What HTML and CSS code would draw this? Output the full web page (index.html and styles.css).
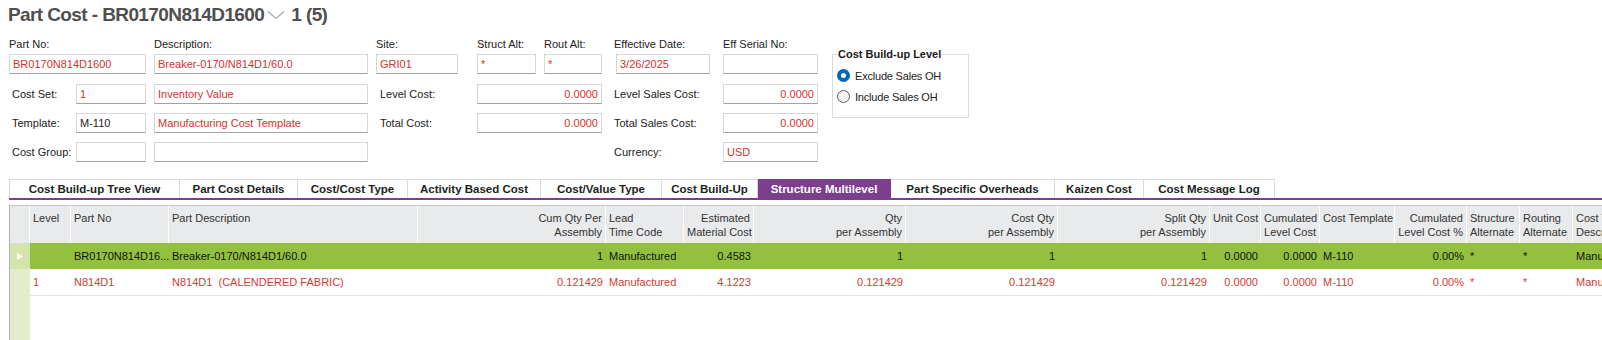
FILE: index.html
```html
<!DOCTYPE html>
<html>
<head>
<meta charset="utf-8">
<link rel="stylesheet" href="styles.css">
</head>
<body>
<div class="title">
  <span>Part Cost - BR0170N814D1600</span>
  <svg class="chev" width="18" height="10" viewBox="0 0 18 10"><polyline points="1,1.5 9,8.5 17,1.5" fill="none" stroke="#a8a8a8" stroke-width="1.2"/></svg>
  <span>1 (5)</span>
</div>

<div class="form">
  <div class="fields">
    <div class="frow labels">
      <span class="lbl c1">Part No:</span>
      <span class="lbl c4">Description:</span>
      <span class="lbl c6">Site:</span>
      <span class="lbl c8">Struct Alt:</span>
      <span class="lbl c10">Rout Alt:</span>
      <span class="lbl c12">Effective Date:</span>
      <span class="lbl c13">Eff Serial No:</span>
    </div>
    <div class="frow">
      <div class="inp pn">BR0170N814D1600</div>
      <div class="inp c4">Breaker-0170/N814D1/60.0</div>
      <div class="inp c6">GRI01</div>
      <div class="inp c8">*</div>
      <div class="inp c10">*</div>
      <div class="inp c12 eff">3/26/2025</div>
      <div class="inp c13"></div>
    </div>
    <div class="frow r2">
      <span class="lbl c1 ind">Cost Set:</span>
      <div class="inp c2">1</div>
      <div class="inp c4">Inventory Value</div>
      <span class="lbl c6 ind2">Level Cost:</span>
      <div class="inp lc num">0.0000</div>
      <span class="lbl c12">Level Sales Cost:</span>
      <div class="inp c13 num">0.0000</div>
    </div>
    <div class="frow r3">
      <span class="lbl c1 ind">Template:</span>
      <div class="inp c2 blk">M-110</div>
      <div class="inp c4">Manufacturing Cost Template</div>
      <span class="lbl c6 ind2">Total Cost:</span>
      <div class="inp lc num">0.0000</div>
      <span class="lbl c12">Total Sales Cost:</span>
      <div class="inp c13 num">0.0000</div>
    </div>
    <div class="frow r3">
      <span class="lbl c1 ind">Cost Group:</span>
      <div class="inp c2"></div>
      <div class="inp c4"></div>
      <span class="lbl c12">Currency:</span>
      <div class="inp c13">USD</div>
    </div>
  </div>
  <fieldset class="box">
    <legend>Cost Build-up Level</legend>
    <div class="radio first"><span class="rb on"></span>Exclude Sales OH</div>
    <div class="radio"><span class="rb"></span>Include Sales OH</div>
  </fieldset>
</div>

<div class="tabs">
  <div class="tab">Cost Build-up Tree View</div>
  <div class="tab">Part Cost Details</div>
  <div class="tab">Cost/Cost Type</div>
  <div class="tab">Activity Based Cost</div>
  <div class="tab">Cost/Value Type</div>
  <div class="tab">Cost Build-Up</div>
  <div class="tab active">Structure Multilevel</div>
  <div class="tab">Part Specific Overheads</div>
  <div class="tab">Kaizen Cost</div>
  <div class="tab">Cost Message Log</div>
</div>

<div class="grid">
  <div class="ghead">
    <div class="cell w-g"></div>
    <div class="cell w-lvl">Level</div>
    <div class="cell w-pn">Part No</div>
    <div class="cell w-pd">Part Description</div>
    <div class="cell w-cq r">Cum Qty Per<br>Assembly</div>
    <div class="cell w-lt">Lead<br>Time Code</div>
    <div class="cell w-em r">Estimated<br>Material Cost</div>
    <div class="cell w-q r">Qty<br>per Assembly</div>
    <div class="cell w-q r">Cost Qty<br>per Assembly</div>
    <div class="cell w-q r">Split Qty<br>per Assembly</div>
    <div class="cell w-uc r">Unit Cost</div>
    <div class="cell w-cl r">Cumulated<br>Level Cost</div>
    <div class="cell w-ct">Cost Template</div>
    <div class="cell w-cp r">Cumulated<br>Level Cost %</div>
    <div class="cell w-alt">Structure<br>Alternate</div>
    <div class="cell w-alt">Routing<br>Alternate</div>
    <div class="cell w-desc">Cost Template<br>Description</div>
  </div>
  <div class="gbody">
    <div class="gutter">
      <div class="gsel"><svg width="6" height="7" viewBox="0 0 6 7"><polygon points="0,0 6,3.5 0,7" fill="#fff"/></svg></div>
    </div>
    <div class="rows">
      <div class="grow sel">
        <div class="cell w-lvl"></div>
        <div class="cell w-pn">BR0170N814D16...</div>
        <div class="cell w-pd">Breaker-0170/N814D1/60.0</div>
        <div class="cell w-cq r">1</div>
        <div class="cell w-lt">Manufactured</div>
        <div class="cell w-em r">0.4583</div>
        <div class="cell w-q r">1</div>
        <div class="cell w-q r">1</div>
        <div class="cell w-q r">1</div>
        <div class="cell w-uc r">0.0000</div>
        <div class="cell w-cl r">0.0000</div>
        <div class="cell w-ct">M-110</div>
        <div class="cell w-cp r">0.00%</div>
        <div class="cell w-alt">*</div>
        <div class="cell w-alt">*</div>
        <div class="cell w-desc">Manufacturing Cost Template</div>
      </div>
      <div class="grow red">
        <div class="cell w-lvl">1</div>
        <div class="cell w-pn">N814D1</div>
        <div class="cell w-pd">N814D1&nbsp; (CALENDERED FABRIC)</div>
        <div class="cell w-cq r">0.121429</div>
        <div class="cell w-lt">Manufactured</div>
        <div class="cell w-em r">4.1223</div>
        <div class="cell w-q r">0.121429</div>
        <div class="cell w-q r">0.121429</div>
        <div class="cell w-q r">0.121429</div>
        <div class="cell w-uc r">0.0000</div>
        <div class="cell w-cl r">0.0000</div>
        <div class="cell w-ct">M-110</div>
        <div class="cell w-cp r">0.00%</div>
        <div class="cell w-alt">*</div>
        <div class="cell w-alt">*</div>
        <div class="cell w-desc">Manufacturing Cost Template</div>
      </div>
    </div>
  </div>
</div>
</body>
</html>
```

FILE: styles.css
```css
* { box-sizing: border-box; }
html, body { margin: 0; padding: 0; }
body {
  width: 1602px;
  height: 340px;
  overflow: hidden;
  background: #fff;
  color: #222;
  font-family: "Liberation Sans", Arial, sans-serif;
  font-size: 11px;
}

/* Title */
.title {
  display: flex;
  align-items: center;
  height: 22px;
  margin: 4px 0 0 8px;
  font-size: 19px;
  font-weight: 700;
  line-height: 22px;
  letter-spacing: -0.6px;
  color: #4f4f4f;
  white-space: nowrap;
}
.title .chev { margin: 0 6px 0 3px; }

/* Form */
.form {
  display: flex;
  align-items: flex-start;
  margin: 12px 0 0 9px;
}
.fields { width: 809px; flex: none; }
.frow {
  display: grid;
  grid-template-columns: 67px 70px 8px 214px 8px 82px 19px 59px 8px 58px 12px 109px 95px;
  height: 20px;
  align-items: center;
}
.frow.labels { height: 13px; margin-bottom: 3px; line-height: 13px; }
.frow.r2 { margin-top: 10px; }
.frow.r3 { margin-top: 9px; }

.lbl { white-space: nowrap; color: #222; }
.lbl.ind { padding-left: 3px; }
.lbl.ind2 { padding-left: 4px; }
.c1 { grid-column: 1; }
.c2 { grid-column: 2; }
.c4 { grid-column: 4; }
.c6 { grid-column: 6; }
.c8 { grid-column: 8; }
.c10 { grid-column: 10; }
.c12 { grid-column: 12; }
.c13 { grid-column: 13; }
.pn { grid-column: 1 / 3; }
.lc { grid-column: 8 / 11; }
.eff { margin-left: 2px; width: 94px; }

.inp {
  height: 20px;
  border: 1px solid #d6d6d6;
  border-bottom-color: #a2a2a2;
  background: #fff;
  padding: 0 3px;
  line-height: 18px;
  color: #d2322d;
  white-space: nowrap;
  overflow: hidden;
}
.inp.num { text-align: right; }
.inp.blk { color: #222; }

/* Group box */
.box {
  margin: 10px 0 0 14px;
  width: 137px;
  height: 70px;
  border: 1px solid #dcdcdc;
  padding: 0 0 0 4px;
  min-width: 0;
}
.box legend {
  padding: 0 1px;
  font-weight: 700;
  font-size: 11px;
  line-height: 13px;
  color: #1a1a1a;
}
.radio {
  display: flex;
  align-items: center;
  gap: 5px;
  height: 21px;
  white-space: nowrap;
  letter-spacing: -0.2px;
}
.radio.first { margin-top: 4px; }
.rb {
  width: 13px;
  height: 13px;
  border-radius: 50%;
  border: 1px solid #5d5d5d;
  background: #f2f2f2;
  flex: none;
  display: flex;
  align-items: center;
  justify-content: center;
}
.rb.on {
  border: none;
  background: #0067c0;
}
.rb.on::after {
  content: "";
  width: 5px;
  height: 5px;
  border-radius: 50%;
  background: #fff;
}

/* Tabs */
.tabs {
  display: flex;
  height: 21px;
  margin: 17px 0 0 9px;
  border-bottom: 2px solid #7d3e8d;
}
.tab {
  flex: none;
  height: 19px;
  border-top: 1px solid #d9d9d9;
  border-right: 1px solid #d9d9d9;
  font-weight: 700;
  font-size: 11.5px;
  line-height: 18px;
  text-align: center;
  color: #1e1e1e;
  white-space: nowrap;
}
.tab:nth-child(1) { width: 171px; border-left: 1px solid #d9d9d9; }
.tab:nth-child(2) { width: 118px; }
.tab:nth-child(3) { width: 110px; }
.tab:nth-child(4) { width: 133px; }
.tab:nth-child(5) { width: 121px; }
.tab:nth-child(6) { width: 96px; }
.tab:nth-child(7) { width: 133px; }
.tab:nth-child(8) { width: 164px; }
.tab:nth-child(9) { width: 89px; }
.tab:nth-child(10) { width: 131px; }
.tab.active {
  background: #7d3e8d;
  border-top-color: #7d3e8d;
  border-right-color: #7d3e8d;
  color: #fff;
}

/* Grid */
.grid {
  margin: 5px 0 0 9px;
  border-top: 1px solid #c5c5c5;
  border-left: 1px solid #b3b3b3;
  overflow: hidden;
}
.cell {
  flex: none;
  padding: 0 3px;
  white-space: nowrap;
  overflow: hidden;
}
.cell.r { text-align: right; }
.w-g { width: 20px; }
.w-lvl { width: 41px; }
.w-pn { width: 98px; }
.w-pd { width: 249px; }
.w-cq { width: 188px; }
.w-lt { width: 78px; }
.w-em { width: 70px; }
.w-q { width: 152px; }
.w-uc { width: 51px; }
.w-cl { width: 59px; }
.w-ct { width: 75px; }
.w-cp { width: 72px; }
.w-alt { width: 53px; }
.w-desc { width: 140px; }

.ghead {
  display: flex;
  height: 37px;
  background: #e9eaeb;
  color: #333;
  width: 1800px;
}
.ghead .cell {
  border-right: 1px solid #fff;
  padding-top: 5px;
  line-height: 14px;
}

.gbody { display: flex; height: 97px; }
.gutter {
  flex: none;
  width: 20px;
  background: #e3ecca;
}
.gsel {
  height: 26px;
  background: #d5e4ad;
  display: flex;
  align-items: center;
  padding-left: 7px;
}
.rows { flex: none; width: 1800px; }
.grow {
  display: flex;
  height: 26px;
  line-height: 26px;
}
.grow.sel { background: #93c13f; color: #111; }
.grow.red {
  height: 27px;
  line-height: 26px;
  color: #d43a32;
  border-bottom: 1px solid #e3e3e3;
}
```
